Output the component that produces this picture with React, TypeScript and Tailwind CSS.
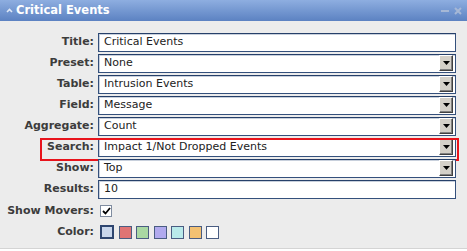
import React from "react";

type Row = { label: string; value: string; select: boolean };

const rows: Row[] = [
  { label: "Title", value: "Critical Events", select: false },
  { label: "Preset", value: "None", select: true },
  { label: "Table", value: "Intrusion Events", select: true },
  { label: "Field", value: "Message", select: true },
  { label: "Aggregate", value: "Count", select: true },
  { label: "Search", value: "Impact 1/Not Dropped Events", select: true },
  { label: "Show", value: "Top", select: true },
  { label: "Results", value: "10", select: false },
];

const swatches = [
  "bg-[#c9d7ec]",
  "bg-[#e07474]",
  "bg-[#a9d8a3]",
  "bg-[#b1aaee]",
  "bg-[#b9eaea]",
  "bg-[#f3c172]",
  "bg-white",
];

function Label({ text }: { text: string }) {
  return (
    <div className="w-[98px] shrink-0 pr-[4px] text-right font-bold text-[11px] text-[#3c3c3c]">
      {text}:
    </div>
  );
}

function ArrowButton() {
  return (
    <div className="flex h-[16px] w-[14px] items-center justify-center border border-t-white border-l-white border-b-[#404040] border-r-[#404040] bg-[#d4d0c8] shadow-[inset_-1px_-1px_0_#808080]">
      <svg width="7" height="4" viewBox="0 0 7 4">
        <polygon points="0,0 7,0 3.5,4" fill="#000" />
      </svg>
    </div>
  );
}

function Field({ row }: { row: Row }) {
  return (
    <div className="relative flex h-[21px] items-start">
      {row.label === "Search" && (
        <div className="pointer-events-none absolute left-[40px] right-[8px] top-0 bottom-[-2px] border-2 border-[#e8141c]" />
      )}
      <div className="flex h-[19px] items-center">
        <Label text={row.label} />
      </div>
      <div className="flex h-[19px] w-[358px] items-center justify-between border border-[#34507c] border-t-[#26406a] bg-white pl-[5px] pr-[2px] shadow-[inset_1px_1px_0_#c8d0dc]">
        <span className="text-[11px] text-[#222]">{row.value}</span>
        {row.select && <ArrowButton />}
      </div>
    </div>
  );
}

export default function App() {
  return (
    <div className="h-[251px] w-[467px] bg-white font-['DejaVu_Sans',Verdana,sans-serif]">
      <div className="flex h-[249px] flex-col border-b border-[#d4d4d4] bg-[#ececec]">
        <div className="flex h-[21px] items-center justify-between bg-gradient-to-b from-[#8eaee0] to-[#5c82c2] pl-[6px] pr-[5px]">
          <div className="flex items-center gap-[3px]">
            <svg width="7" height="5" viewBox="0 0 7 5">
              <polyline points="1,4 3.5,1.5 6,4" fill="none" stroke="#dfe8f6" strokeWidth="1.6" />
            </svg>
            <span className="font-bold text-[11.5px] text-white">Critical Events</span>
          </div>
          <div className="flex items-center gap-[5px]">
            <div className="h-[2px] w-[8px] bg-[#a6b8d6]" />
            <svg width="8" height="8" viewBox="0 0 8 8">
              <path d="M1 1 L7 7 M7 1 L1 7" stroke="#a6b8d6" strokeWidth="2" />
            </svg>
          </div>
        </div>
        <div className="flex flex-col pt-[11.5px]">
          {rows.map((r) => (
            <Field key={r.label} row={r} />
          ))}
          <div className="flex h-[21px] items-center">
            <Label text="Show Movers" />
            <div className="ml-[2px] flex h-[12px] w-[12px] items-center justify-center border border-[#7f8ca0] bg-white">
              <svg width="9" height="8" viewBox="0 0 9 8">
                <polyline points="1,4 3.5,6.5 8,1" fill="none" stroke="#000" strokeWidth="1.8" />
              </svg>
            </div>
          </div>
          <div className="flex h-[21px] items-center">
            <Label text="Color" />
            <div className="flex items-center gap-[4.5px] pl-[2px]">
              {swatches.map((c, i) => (
                <div
                  key={c}
                  className={
                    i === 0
                      ? `h-[14px] w-[14px] border-2 border-[#2e4670] ${c}`
                      : `h-[13px] w-[13px] border-[1.5px] border-[#4a5d82] ${c}`
                  }
                />
              ))}
            </div>
          </div>
        </div>
      </div>
    </div>
  );
}
